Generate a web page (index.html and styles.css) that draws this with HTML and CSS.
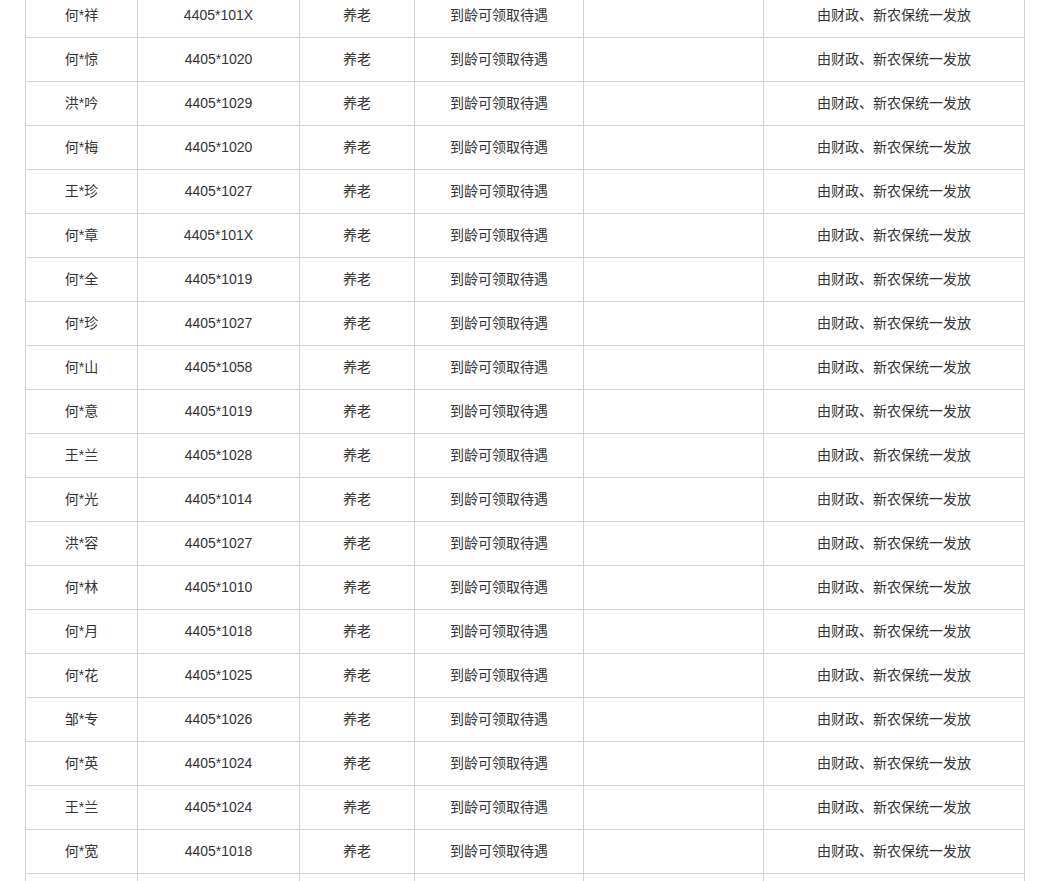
FILE: index.html
```html
<!DOCTYPE html>
<html lang="zh-CN">
<head>
    <meta charset="UTF-8">
    <meta name="viewport" content="width=device-width, initial-scale=1.0">
    <title>待遇领取名单</title>
    <link rel="stylesheet" href="styles.css">
</head>
<body>
    <div class="list-box">
        <table class="list-table">
            <colgroup>
                <col class="col-name">
                <col class="col-id">
                <col class="col-type">
                <col class="col-status">
                <col class="col-note">
                <col class="col-pay">
            </colgroup>
            <tbody>
                <tr><td>何*祥</td><td>4405*101X</td><td>养老</td><td>到龄可领取待遇</td><td></td><td>由财政、新农保统一发放</td></tr>
                <tr><td>何*惊</td><td>4405*1020</td><td>养老</td><td>到龄可领取待遇</td><td></td><td>由财政、新农保统一发放</td></tr>
                <tr><td>洪*吟</td><td>4405*1029</td><td>养老</td><td>到龄可领取待遇</td><td></td><td>由财政、新农保统一发放</td></tr>
                <tr><td>何*梅</td><td>4405*1020</td><td>养老</td><td>到龄可领取待遇</td><td></td><td>由财政、新农保统一发放</td></tr>
                <tr><td>王*珍</td><td>4405*1027</td><td>养老</td><td>到龄可领取待遇</td><td></td><td>由财政、新农保统一发放</td></tr>
                <tr><td>何*章</td><td>4405*101X</td><td>养老</td><td>到龄可领取待遇</td><td></td><td>由财政、新农保统一发放</td></tr>
                <tr><td>何*全</td><td>4405*1019</td><td>养老</td><td>到龄可领取待遇</td><td></td><td>由财政、新农保统一发放</td></tr>
                <tr><td>何*珍</td><td>4405*1027</td><td>养老</td><td>到龄可领取待遇</td><td></td><td>由财政、新农保统一发放</td></tr>
                <tr><td>何*山</td><td>4405*1058</td><td>养老</td><td>到龄可领取待遇</td><td></td><td>由财政、新农保统一发放</td></tr>
                <tr><td>何*意</td><td>4405*1019</td><td>养老</td><td>到龄可领取待遇</td><td></td><td>由财政、新农保统一发放</td></tr>
                <tr><td>王*兰</td><td>4405*1028</td><td>养老</td><td>到龄可领取待遇</td><td></td><td>由财政、新农保统一发放</td></tr>
                <tr><td>何*光</td><td>4405*1014</td><td>养老</td><td>到龄可领取待遇</td><td></td><td>由财政、新农保统一发放</td></tr>
                <tr><td>洪*容</td><td>4405*1027</td><td>养老</td><td>到龄可领取待遇</td><td></td><td>由财政、新农保统一发放</td></tr>
                <tr><td>何*林</td><td>4405*1010</td><td>养老</td><td>到龄可领取待遇</td><td></td><td>由财政、新农保统一发放</td></tr>
                <tr><td>何*月</td><td>4405*1018</td><td>养老</td><td>到龄可领取待遇</td><td></td><td>由财政、新农保统一发放</td></tr>
                <tr><td>何*花</td><td>4405*1025</td><td>养老</td><td>到龄可领取待遇</td><td></td><td>由财政、新农保统一发放</td></tr>
                <tr><td>邹*专</td><td>4405*1026</td><td>养老</td><td>到龄可领取待遇</td><td></td><td>由财政、新农保统一发放</td></tr>
                <tr><td>何*英</td><td>4405*1024</td><td>养老</td><td>到龄可领取待遇</td><td></td><td>由财政、新农保统一发放</td></tr>
                <tr><td>王*兰</td><td>4405*1024</td><td>养老</td><td>到龄可领取待遇</td><td></td><td>由财政、新农保统一发放</td></tr>
                <tr><td>何*宽</td><td>4405*1018</td><td>养老</td><td>到龄可领取待遇</td><td></td><td>由财政、新农保统一发放</td></tr>
                <tr><td></td><td></td><td></td><td></td><td></td><td></td></tr>
            </tbody>
        </table>
    </div>
</body>
</html>
```

FILE: styles.css
```css
body {
    font-family: "Liberation Sans", Arial, "Noto Sans CJK SC", sans-serif;
    margin: 0;
    padding: 0;
    background-color: #fff;
    color: #333;
    overflow: hidden;
}
.list-box {
    width: 999px;
    margin: -7px 0 0 25px;
}
.list-table {
    width: 999px;
    border-collapse: collapse;
    table-layout: fixed;
    font-size: 14px;
}
.list-table td {
    border: 1px solid #d3d3de;
    height: 41px;
    padding: 0 6px 2px;
    text-align: center;
    vertical-align: middle;
    line-height: 20px;
    white-space: nowrap;
}
.col-name { width: 112px; }
.col-id { width: 162px; }
.col-type { width: 115px; }
.col-status { width: 169px; }
.col-note { width: 180px; }
.col-pay { width: 261px; }
```
